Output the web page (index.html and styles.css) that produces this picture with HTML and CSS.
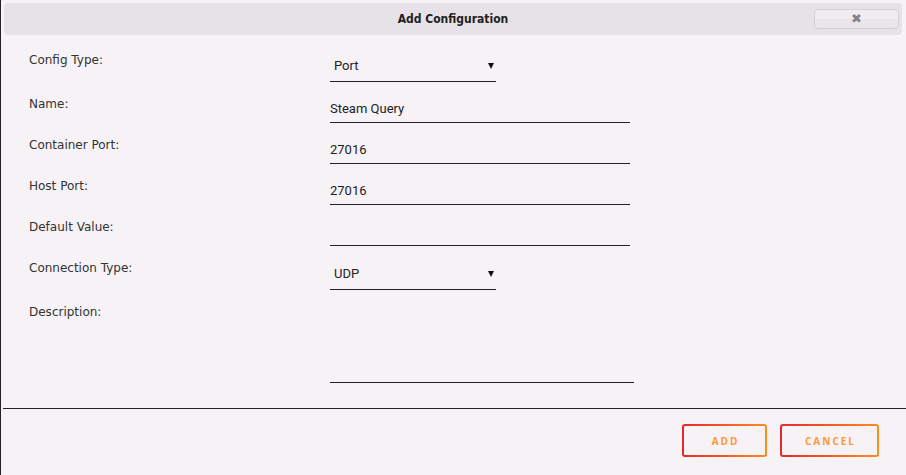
FILE: index.html
```html
<!DOCTYPE html>
<html>

<head>
  <title>Add Configuration</title>
  <link rel="stylesheet" href="styles.css">
</head>

<body>
  <div class="dialog">
    <div class="titlebar">
      <span class="title">Add Configuration</span>
      <button type="button" class="close-btn" aria-label="Close">&#10006;</button>
    </div>

    <form id="config-form" class="config-form">
      <div class="form-row">
        <label for="configType">Config Type:</label>
        <span class="select-wrap">
          <select id="configType" name="configType">
            <option>Port</option>
            <option>Variable</option>
          </select>
        </span>
      </div>
      <div class="form-row">
        <label for="name">Name:</label>
        <input type="text" id="name" name="name" value="Steam Query">
      </div>
      <div class="form-row">
        <label for="containerPort">Container Port:</label>
        <input type="text" id="containerPort" name="containerPort" value="27016">
      </div>
      <div class="form-row">
        <label for="hostPort">Host Port:</label>
        <input type="text" id="hostPort" name="hostPort" value="27016">
      </div>
      <div class="form-row">
        <label for="defaultValue">Default Value:</label>
        <input type="text" id="defaultValue" name="defaultValue">
      </div>
      <div class="form-row">
        <label for="connectionType">Connection Type:</label>
        <span class="select-wrap">
          <select id="connectionType" name="connectionType">
            <option>UDP</option>
            <option>TCP</option>
          </select>
        </span>
      </div>
      <div class="form-row">
        <label for="description">Description:</label>
        <textarea id="description" name="description"></textarea>
      </div>
    </form>

    <div class="actions">
      <button type="button" class="action-btn">ADD</button>
      <button type="button" class="action-btn cancel">CANCEL</button>
    </div>
  </div>
</body>

</html>
```

FILE: styles.css
```css
body {
  margin: 0;
  padding: 0;
  background-color: #f6f2f6;
  font-family: 'DejaVu Sans', sans-serif;
}

.dialog {
  min-height: 475px;
  box-sizing: border-box;
  border-left: 1px solid #222;
  padding-top: 3px;
}

/* window title bar */
.titlebar {
  margin: 0 4px 0 3px;
  height: 32px;
  background-color: #e7e2e7;
  border-radius: 4px;
  display: flex;
  align-items: center;
  justify-content: center;
  position: relative;
}

.title {
  font-family: 'DejaVu Sans Condensed', 'DejaVu Sans', sans-serif;
  font-weight: bold;
  font-size: 12px;
  color: #222;
}

.close-btn {
  position: absolute;
  right: 3px;
  top: 6px;
  width: 85px;
  height: 20px;
  border: 1px solid #d3cfd3;
  border-radius: 4px;
  background: linear-gradient(#efedef 0 50%, #e9e6e9 50% 100%);
  color: #858285;
  font-size: 13px;
  line-height: 16px;
  padding: 0;
}

/* form rows */
.config-form {
  padding: 17px 0 0 28px;
}

.form-row {
  display: flex;
  align-items: flex-start;
  margin-bottom: 14px;
}

.form-row label {
  width: 301px;
  flex-shrink: 0;
  font-size: 12px;
  line-height: 16px;
  color: #333;
}

input[type="text"],
select,
textarea {
  font-family: 'Roboto', sans-serif;
  font-size: 13px;
  color: #222;
  background: transparent;
  border: none;
  border-bottom: 1px solid #222;
  outline: none;
  box-sizing: border-box;
  margin: 0;
}

input[type="text"] {
  width: 300px;
  height: 27px;
  padding: 0 0 2px 0;
}

.select-wrap {
  position: relative;
  display: inline-block;
}

.select-wrap::after {
  content: "";
  position: absolute;
  right: 2px;
  top: 11px;
  border-left: 3px solid transparent;
  border-right: 3px solid transparent;
  border-top: 6px solid #111;
  pointer-events: none;
}

select {
  -webkit-appearance: none;
  appearance: none;
  width: 166px;
  height: 30px;
  padding: 0 0 2px 4px;
}

textarea {
  width: 304px;
  height: 79px;
  resize: none;
  padding: 0;
}

/* bottom button bar */
.actions {
  margin: 25px 0 0 2px;
  border-top: 1px solid #222;
  padding: 15px 27px 0 0;
  display: flex;
  justify-content: flex-end;
  gap: 13px;
}

.action-btn {
  height: 33px;
  width: 85px;
  border: 2px solid transparent;
  border-radius: 3px;
  background: linear-gradient(#f6f2f6, #f6f2f6) padding-box,
    linear-gradient(to right, #e5282a, #ff8c1f) border-box;
  color: #ff9838;
  font-family: 'Open Sans', sans-serif;
  font-weight: bold;
  font-size: 10px;
  letter-spacing: 2px;
  padding: 0 0 0 2px;
  cursor: pointer;
}

.action-btn.cancel {
  width: 99px;
}
```
